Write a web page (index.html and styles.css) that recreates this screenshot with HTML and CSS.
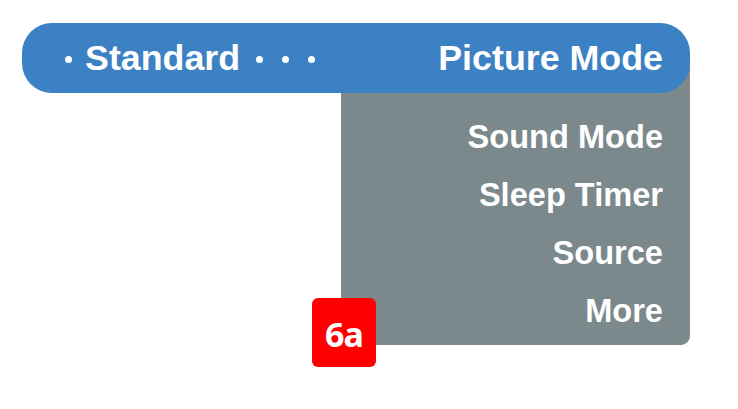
FILE: index.html
```html
<!DOCTYPE html>
<html>
<head>
<meta charset="utf-8">
<link rel="stylesheet" href="styles.css">
</head>
<body>
<div class="menu">
  <div class="bar">
    <div class="current">
      <span class="dot"></span>
      <span class="value">Standard</span>
      <span class="dots"><span class="dot"></span><span class="dot"></span><span class="dot"></span></span>
    </div>
    <div class="title">Picture Mode</div>
  </div>
  <div class="panel">
    <div class="item">Sound Mode</div>
    <div class="item">Sleep Timer</div>
    <div class="item">Source</div>
    <div class="item">More</div>
    <div class="badge">6a</div>
  </div>
</div>
</body>
</html>
```

FILE: styles.css
```css
html, body {
  margin: 0;
  padding: 0;
  background: #ffffff;
}
body {
  font-family: "Liberation Sans", Arial, sans-serif;
  color: #ffffff;
  min-height: 409px;
}
.menu {
  padding: 23px 0 42px 22px;
  width: 668px;
}
.bar {
  position: relative;
  z-index: 2;
  height: 70px;
  border-radius: 30px;
  background: #3b81c4;
  display: flex;
  align-items: center;
  justify-content: space-between;
  padding: 0 27px 0 43px;
  box-sizing: border-box;
}
.current {
  display: flex;
  align-items: center;
}
.dot {
  width: 7px;
  height: 7px;
  border-radius: 50%;
  background: #ffffff;
  display: block;
}
.value {
  font-size: 35.8px;
  font-weight: bold;
  margin: 0 16px 0 13px;
}
.dots {
  display: flex;
  gap: 19px;
  margin-top: 2px;
}
.current > .dot {
  margin-top: 2px;
}
.title {
  font-size: 35.8px;
  font-weight: bold;
}
.panel {
  position: relative;
  z-index: 1;
  margin: -30px 0 0 319px;
  padding: 45px 27px 5px 0;
  background: #7b898c;
  border-radius: 0 0 9px 9px;
  text-align: right;
}
.item {
  font-size: 32.6px;
  font-weight: bold;
  line-height: 58px;
}
.badge {
  position: absolute;
  left: -29px;
  bottom: -22px;
  width: 64px;
  height: 69px;
  border-radius: 6px;
  background: #ff0000;
  display: flex;
  align-items: center;
  justify-content: center;
  font-family: "Noto Sans", "Liberation Sans", sans-serif;
  font-size: 34px;
  font-weight: bold;
  letter-spacing: -1px;
  line-height: 1;
  padding-top: 3px;
  box-sizing: border-box;
}
```
